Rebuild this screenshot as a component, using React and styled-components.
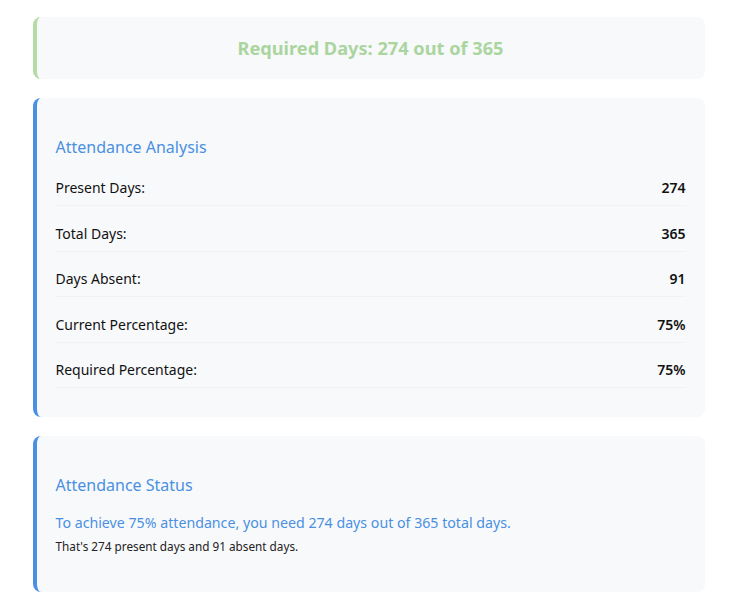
import styled, { createGlobalStyle } from "styled-components";

const GlobalStyle = createGlobalStyle`
  body {
    margin: 0;
    background: #ffffff;
    font-family: "Noto Sans", "Open Sans", sans-serif;
  }
`;

const rows = [
  { label: "Present Days:", value: "274" },
  { label: "Total Days:", value: "365" },
  { label: "Days Absent:", value: "91" },
  { label: "Current Percentage:", value: "75%" },
  { label: "Required Percentage:", value: "75%" },
];

export default function App() {
  return (
    <>
      <GlobalStyle />
      <Page>
        <Card $accent="#b6dba6">
          <Summary>Required Days: 274 out of 365</Summary>
        </Card>
        <Card $accent="#4a90e2" $padded>
          <Heading>Attendance Analysis</Heading>
          {rows.map((r) => (
            <Row key={r.label}>
              <Label>{r.label}</Label>
              <Value>{r.value}</Value>
            </Row>
          ))}
        </Card>
        <Card $accent="#4a90e2" $padded>
          <Heading>Attendance Status</Heading>
          <StatusText>
            To achieve 75% attendance, you need 274 days out of 365 total days.
          </StatusText>
          <Note>That's 274 present days and 91 absent days.</Note>
        </Card>
      </Page>
    </>
  );
}

const Page = styled.div`
  width: 672px;
  margin: 0 auto;
  padding: 17px 0 26px 1px;
  display: flex;
  flex-direction: column;
  gap: 19px;
`;

const Card = styled.div`
  background: #f8f9fb;
  border-left: 4px solid ${(p) => p.$accent};
  border-radius: 8px;
  padding: ${(p) => (p.$padded ? "29px 19px 19px 19px" : "0 19px")};
  display: flex;
  flex-direction: column;
`;

const Summary = styled.div`
  height: 62px;
  display: flex;
  align-items: center;
  justify-content: center;
  font-size: 18.2px;
  font-weight: 700;
  color: #abd59f;
`;

const Heading = styled.h3`
  margin: 8px 0 11px;
  font-size: 16px;
  font-weight: 400;
  line-height: 24px;
  color: #4a90e2;
`;

const Row = styled.div`
  display: flex;
  justify-content: space-between;
  align-items: center;
  padding: 7px 0;
  margin-bottom: 9.5px;
  line-height: 21px;
  border-bottom: 1px solid #f0f2f6;
  font-size: 14px;
`;

const Label = styled.span`
  color: #111111;
`;

const Value = styled.span`
  font-weight: 600;
  color: #111111;
`;

const StatusText = styled.p`
  margin: 4px 0 3px;
  font-size: 14.2px;
  line-height: 22px;
  color: #4a90e2;
`;

const Note = styled.p`
  margin: 0 0 18px;
  font-size: 11.75px;
  line-height: 18px;
  color: #222222;
`;
